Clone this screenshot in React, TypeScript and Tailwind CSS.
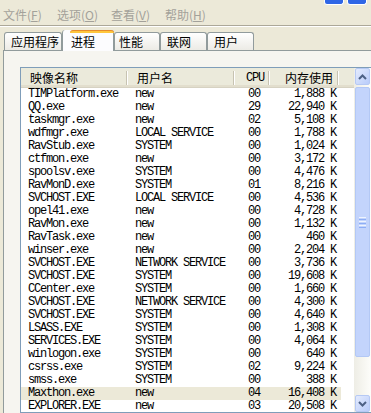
const cjk = { fontFamily: '"Noto Sans CJK SC", "Liberation Sans", sans-serif' };
const mono = { fontFamily: '"Liberation Mono", "Noto Sans CJK SC", monospace' };

const rows: [string, string, string, string][] = [
  ["TIMPlatform.exe", "new", "00", "1,888 K"],
  ["QQ.exe", "new", "29", "22,940 K"],
  ["taskmgr.exe", "new", "02", "5,108 K"],
  ["wdfmgr.exe", "LOCAL SERVICE", "00", "1,788 K"],
  ["RavStub.exe", "SYSTEM", "00", "1,024 K"],
  ["ctfmon.exe", "new", "00", "3,172 K"],
  ["spoolsv.exe", "SYSTEM", "00", "4,476 K"],
  ["RavMonD.exe", "SYSTEM", "01", "8,216 K"],
  ["SVCHOST.EXE", "LOCAL SERVICE", "00", "4,536 K"],
  ["opel41.exe", "new", "00", "4,728 K"],
  ["RavMon.exe", "new", "00", "1,132 K"],
  ["RavTask.exe", "new", "00", "460 K"],
  ["winser.exe", "new", "00", "2,204 K"],
  ["SVCHOST.EXE", "NETWORK SERVICE", "00", "3,736 K"],
  ["SVCHOST.EXE", "SYSTEM", "00", "19,608 K"],
  ["CCenter.exe", "SYSTEM", "00", "1,660 K"],
  ["SVCHOST.EXE", "NETWORK SERVICE", "00", "4,300 K"],
  ["SVCHOST.EXE", "SYSTEM", "00", "4,640 K"],
  ["LSASS.EXE", "SYSTEM", "00", "1,308 K"],
  ["SERVICES.EXE", "SYSTEM", "00", "4,064 K"],
  ["winlogon.exe", "SYSTEM", "00", "640 K"],
  ["csrss.exe", "SYSTEM", "02", "9,224 K"],
  ["smss.exe", "SYSTEM", "00", "388 K"],
  ["Maxthon.exe", "new", "04", "16,408 K"],
  ["EXPLORER.EXE", "new", "03", "20,508 K"],
];

const menus = [
  ["文件", "F"],
  ["选项", "O"],
  ["查看", "V"],
  ["帮助", "H"],
];

const tabs = [
  { label: "应用程序", w: "w-[58px]", pl: "pl-[6px]" },
  { label: "进程", w: "w-[52px]", pl: "pl-[8px]", active: true },
  { label: "性能", w: "w-[46px]", pl: "pl-[4px]" },
  { label: "联网", w: "w-[47px]", pl: "pl-[6px]" },
  { label: "用户", w: "w-[47px]", pl: "pl-[6px]" },
];

function Divider() {
  return (
    <span className="flex h-[14px] shrink-0">
      <span className="w-px bg-[#C7C3B2]" />
      <span className="w-px bg-white" />
    </span>
  );
}

function Arrow({ down }: { down?: boolean }) {
  return (
    <svg width="9" height="6" viewBox="0 0 9 6">
      <path
        d={down ? "M1 1 L4.5 4.5 L8 1" : "M1 5 L4.5 1.5 L8 5"}
        fill="none"
        stroke="#4D6185"
        strokeWidth={2}
      />
    </svg>
  );
}

function ScrollButton({ down }: { down?: boolean }) {
  return (
    <div className="mx-px flex h-[17px] shrink-0 items-center justify-center rounded-[2px] border border-[#B6C9F4] bg-gradient-to-br from-[#E4EBFD] to-[#B9CCFA]">
      <Arrow down={down} />
    </div>
  );
}

export default function App() {
  return (
    <div className="flex h-[413px] w-[371px] flex-col overflow-hidden bg-[#ECE9D8] text-black" style={cjk}>
      {/* title bar remains */}
      <div className="flex h-[5px] shrink-0 justify-end gap-[3px] pr-[4px]">
        <div className="w-[20px] rounded-b-[3px] border-x border-b border-white bg-[#2F66E6]" />
        <div className="w-[20px] rounded-b-[3px] border-x border-b border-white bg-[#2F66E6]" />
      </div>

      {/* menu */}
      <div className="flex h-[20px] shrink-0 items-center pl-[3px] text-[12px] leading-none text-[#A3A19A]">
        {menus.map(([t, k]) => (
          <div key={t} className="w-[54px] whitespace-nowrap">
            {t}(<span className="underline">{k}</span>)
          </div>
        ))}
      </div>
      <div className="h-[2px] shrink-0 border-t border-b border-t-[#ACA899] border-b-white" />
      <div className="h-[3px] shrink-0" />

      {/* tabs */}
      <div className="flex h-[20px] shrink-0 items-end pl-[4px] text-[12px] leading-none">
        {tabs.map((t) =>
          t.active ? (
            <div
              key={t.label}
              className={`relative z-10 -mb-px flex h-[21px] ${t.w} ${t.pl} flex-col rounded-t-[3px] border-x border-[#919B9C] bg-[#FCFCFE]`}
            >
              <div className="-mx-px h-[3px] rounded-t-[3px] border-t border-[#E68B2C] bg-[#FFC73C]" />
              <div className="pt-[3px]">{t.label}</div>
            </div>
          ) : (
            <div
              key={t.label}
              className={`flex h-[18px] ${t.w} ${t.pl} items-center rounded-t-[3px] border-x border-t border-[#919B9C] bg-gradient-to-b from-white to-[#ECEBE5] pt-px`}
            >
              {t.label}
            </div>
          )
        )}
      </div>

      {/* panel */}
      <div className="ml-[3px] flex-1 border-l border-t border-[#919B9C] bg-[#F6F5F0] pl-[16px] pt-[16px]">
        <div className="flex h-[346px] w-[352px] border border-[#7F9DB9] bg-white">
          <div className="flex w-[333px] flex-col overflow-hidden">
            {/* header */}
            <div className="flex h-[20px] shrink-0 items-center border-b border-[#D6D2C2] bg-[#EBEADB] text-[12px] leading-none shadow-[inset_0_-2px_0_#E2DECD]">
              <div className="flex w-[107px] items-center justify-between pl-[9px]">
                <span>映像名称</span>
                <Divider />
              </div>
              <div className="flex w-[107px] items-center justify-between pl-[9px]">
                <span>用户名</span>
                <Divider />
              </div>
              <div className="flex w-[35px] items-center justify-end">
                <span className="pr-[4px] text-[12px] tracking-[-1.2px]" style={mono}>
                  CPU
                </span>
                <Divider />
              </div>
              <div className="flex w-[69px] items-center justify-end">
                <span className="pr-[4px]">内存使用</span>
                <Divider />
              </div>
            </div>

            {/* rows */}
            {rows.map(([name, user, cpu, mem], i) => (
              <div
                key={i}
                className={`flex h-[13px] w-[320px] shrink-0 items-center whitespace-nowrap text-[12px] leading-[13px] tracking-[-1.2px] ${
                  name === "Maxthon.exe" ? "bg-[#ECE9D8]" : ""
                }`}
                style={mono}
              >
                <div className="w-[107px] pl-[7px]">{name}</div>
                <div className="w-[107px] pl-[7px]">{user}</div>
                <div className="w-[35px] pr-[10px] text-right">{cpu}</div>
                <div className="w-[69px] pr-[3px] text-right">{mem}</div>
              </div>
            ))}
          </div>

          {/* scrollbar */}
          <div className="flex w-[17px] flex-col bg-gradient-to-r from-[#EEEDE5] to-[#FDFDFA]">
            <ScrollButton />
            <div className="mx-px mt-[2px] flex h-[270px] items-center justify-center rounded-[2px] border border-[#B3C8F5] bg-[#C3D4FC]">
              <div className="flex flex-col gap-px">
                <div className="h-px w-[7px] bg-[#EEF4FE]" />
                <div className="h-px w-[7px] bg-[#8DAEF5]" />
                <div className="h-px w-[7px] bg-[#EEF4FE]" />
                <div className="h-px w-[7px] bg-[#8DAEF5]" />
                <div className="h-px w-[7px] bg-[#EEF4FE]" />
                <div className="h-px w-[7px] bg-[#8DAEF5]" />
              </div>
            </div>
            <div className="flex-1" />
            <ScrollButton down />
          </div>
        </div>
      </div>
    </div>
  );
}
